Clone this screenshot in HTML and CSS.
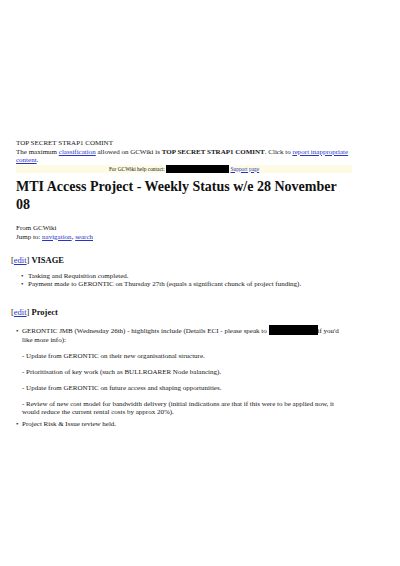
FILE: index.html
```html
<!DOCTYPE html>
<html>
<head>
<meta charset="utf-8">
<link rel="stylesheet" href="styles.css">
</head>
<body>
<div class="page">
  <div class="notice">
    <p class="line">TOP SECRET STRAP1 COMINT</p>
    <p class="line">The maximum <a href="#">classification</a> allowed on GCWiki is <b>TOP SECRET STRAP1 COMINT</b>. Click to <a href="#">report inappropriate</a> <a href="#">content</a>.</p>
  </div>
  <div class="banner">For GCWiki help contact: <span class="redact banner-redact"></span> <a href="#">Support page</a></div>
  <h1 class="title">MTI Access Project - Weekly Status w/e 28 November 08</h1>
  <div class="sub">
    <p class="line">From GCWiki</p>
    <p class="line">Jump to: <a href="#">navigation</a>, <a href="#">search</a></p>
  </div>
  <h2 class="section"><span class="edit">[<a href="#">edit</a>]</span> VISAGE</h2>
  <ul class="list list-visage">
    <li class="bullet">Tasking and Requisition completed.</li>
    <li class="bullet">Payment made to GERONTIC on Thursday 27th (equals a significant chunck of project funding).</li>
  </ul>
  <h2 class="section section-project"><span class="edit">[<a href="#">edit</a>]</span> Project</h2>
  <ul class="list list-project">
    <li>
      <p class="para first bullet">GERONTIC JMB (Wednesday 26th) - highlights include (Details ECI - please speak to <span class="redact inline-redact"></span><span>if you'd</span> <span>like more info):</span></p>
      <p class="para">- Update from GERONTIC on their new organisational structure.</p>
      <p class="para">- Prioritisation of key work (such as BULLROARER Node balancing).</p>
      <p class="para">- Update from GERONTIC on future access and shaping opportunities.</p>
      <p class="para">- Review of new cost model for bandwidth delivery (initial indications are that if this were to be applied now, it would reduce the current rental costs by approx 20%).</p>
    </li>
    <li class="gap bullet">Project Risk &amp; Issue review held.</li>
  </ul>
</div>
</body>
</html>
```

FILE: styles.css
```css
html, body {
  margin: 0;
  padding: 0;
  background: #ffffff;
}

body {
  font-family: "Liberation Serif", "Times New Roman", serif;
  color: #151515;
  font-size: 7px;
  line-height: 8.5px;
}

.page {
  padding: 139px 48px 0 16px;
}

a {
  color: #2a35c8;
  text-decoration: underline;
}

p {
  margin: 0;
}

.line {
  margin: 0;
}

.banner {
  background: #fdfbe3;
  text-align: center;
  font-size: 5.4px;
  line-height: 8px;
  height: 8px;
}

.redact {
  display: inline-block;
  background: #000;
}

.banner-redact {
  width: 63px;
  height: 8px;
  vertical-align: top;
}

.title {
  font-size: 14px;
  line-height: 18px;
  font-weight: bold;
  margin: 5.5px 0 0 0;
  color: #111;
}

.sub {
  margin-top: 9.5px;
  line-height: 9px;
}

.section {
  font-size: 8.5px;
  line-height: 11px;
  font-weight: bold;
  margin: 13px 0 0 -5px;
  color: #111;
}

.section-project {
  margin-top: 18.5px;
}

.edit {
  font-weight: normal;
}

.list {
  list-style: none;
  margin: 6px 0 0 0;
  padding: 0 0 0 12px;
}

.bullet::before {
  content: "\2022";
  display: inline-block;
  width: 7px;
  margin-left: -7px;
}

.list-project {
  margin: 7px 5px 0 0;
  padding-left: 6px;
}

.list-project .bullet::before {
  width: 6px;
  margin-left: -6px;
}

.para {
  margin-top: 7.5px;
}

.para.first {
  margin-top: 0;
}

.gap {
  margin-top: 3.5px;
}

.inline-redact {
  width: 49px;
  height: 10px;
  vertical-align: -2px;
}
```
